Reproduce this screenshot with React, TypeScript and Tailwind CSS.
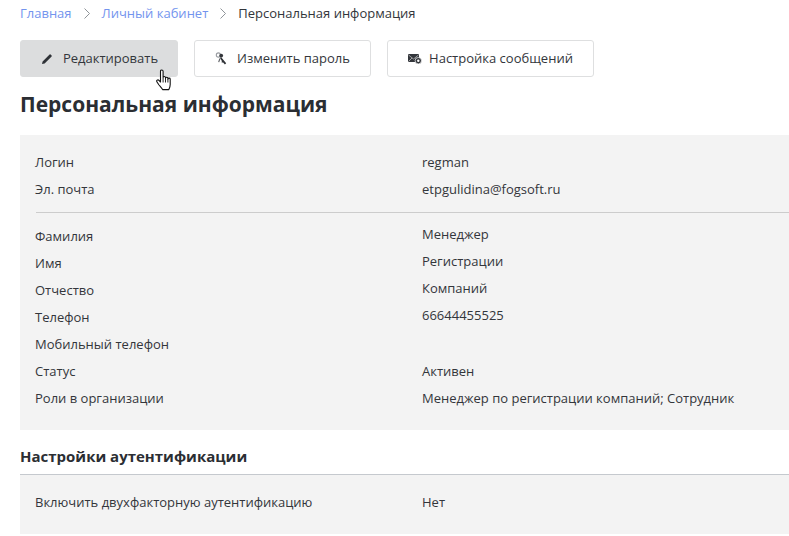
import React from 'react'

const PencilIcon = () => (
  <svg width="12" height="12" viewBox="0 0 12 12" className="shrink-0">
    <path d="M1 11l.6-2.6L8.6 1.4a.7.7 0 0 1 1 0l1 1a.7.7 0 0 1 0 1l-7 7z" fill="#2f3237" />
  </svg>
)

const KeyIcon = () => (
  <svg width="13" height="14" viewBox="0 0 13 14" className="shrink-0">
    <circle cx="3.4" cy="3" r="2.1" fill="none" stroke="#9a9da2" strokeWidth="1.1" />
    <circle cx="6.2" cy="3.6" r="1.9" fill="#33363b" />
    <path d="M6 5l5.2 6.2-1.3 1.2-2-2.2-.7.6-.8-.9.6-.7L5 6z" fill="#2f3237" />
    <path d="M4.4 6.2l1 .5-1.2 3.6-1-.4z" fill="#55585d" />
  </svg>
)

const MailGearIcon = () => (
  <svg width="14" height="12" viewBox="0 0 14 12" className="shrink-0">
    <rect x="0" y="1" width="11" height="8" rx="0.8" fill="#33363b" />
    <path d="M.5 2L5.5 6 10.5 2M.5 8.5L4 5" stroke="#cfcfcf" strokeWidth="0.7" fill="none" />
    <circle cx="10.3" cy="7.7" r="3.2" fill="#33363b" stroke="#fff" strokeWidth="0.7" />
    <circle cx="10.3" cy="7.7" r="1.2" fill="#fff" />
  </svg>
)

const Chevron = () => (
  <svg width="6" height="11" viewBox="0 0 6 11" className="mx-3 shrink-0">
    <path d="M.5.5l5 5-5 5" fill="none" stroke="#8f9499" strokeWidth="1" />
  </svg>
)

const HandCursor = () => (
  <svg width="20" height="24" viewBox="0 0 20 24" className="absolute left-[156px] top-[69px]">
    <path
      d="M4.5 2.2c0-1.6 2.6-1.6 2.6 0v6.4c0-1.4 2.4-1.4 2.4 0v.6c0-1.3 2.4-1.3 2.4 0v.8c0-1.2 2.3-1.2 2.3 0v5.6c0 2.4-.7 3.6-1.4 5H6.6c-.8-1.6-2.1-2.8-3.6-4.6L1 13c-1-1.5.8-2.8 2-1.6l1.5 1.6z"
      fill="#fff"
      stroke="#111"
      strokeWidth="1.1"
      strokeLinejoin="round"
    />
    <path d="M7.1 9v4.5M9.5 9.2v4.3M11.9 10v3.5" stroke="#111" strokeWidth="0.9" />
  </svg>
)

const accountRows = [
  { label: 'Логин', value: 'regman' },
  { label: 'Эл. почта', value: 'etpgulidina@fogsoft.ru' },
]

const personRows = [
  { label: 'Фамилия', value: 'Менеджер', up: true },
  { label: 'Имя', value: 'Регистрации', up: true },
  { label: 'Отчество', value: 'Компаний', up: true },
  { label: 'Телефон', value: '66644455525', up: true },
  { label: 'Мобильный телефон', value: '' },
  { label: 'Статус', value: 'Активен' },
  { label: 'Роли в организации', value: 'Менеджер по регистрации компаний; Сотрудник' },
]

const Row = ({ label, value, up }: { label: string; value: string; up?: boolean }) => (
  <div className="flex h-[27px] items-center">
    <div className="w-[387px] shrink-0">{label}</div>
    <div className={up ? 'pb-1' : ''}>{value}</div>
  </div>
)

const btn = 'flex h-[37px] items-center justify-center rounded-[3px] border'

export default function App() {
  return (
    <div className="relative h-[536px] w-[789px] overflow-hidden bg-white pl-5 font-['Open_Sans',sans-serif] text-[13px] text-[#33363b]">
      {/* breadcrumbs */}
      <div className="flex h-[27px] items-center">
        <span className="text-[#7394ee]">Главная</span>
        <Chevron />
        <span className="text-[#7394ee]">Личный кабинет</span>
        <Chevron />
        <span>Персональная информация</span>
      </div>

      <div className="mt-[13px] flex gap-4">
        <div className={`${btn} w-[158px] gap-[10px] border-[#dcddde] bg-[#dcddde] pl-px`}>
          <PencilIcon />
          <span>Редактировать</span>
        </div>
        <div className={`${btn} w-[177px] gap-[9px] border-[#dedfe0] bg-white`}>
          <KeyIcon />
          <span>Изменить пароль</span>
        </div>
        <div className={`${btn} w-[207px] gap-[7px] border-[#dedfe0] bg-white`}>
          <MailGearIcon />
          <span>Настройка сообщений</span>
        </div>
      </div>

      <h1 className="mt-[11px] h-[33px] text-[21px] font-bold leading-[33px] text-[#2b2e33]">Персональная информация</h1>

      <div className="mt-[14px] h-[295px] bg-[#f3f3f3] pl-[15px] pt-[14px]">
        {accountRows.map((r) => (
          <Row key={r.label} {...r} />
        ))}
        <div className="mb-[10px] ml-px mt-[9px] border-t border-[#cccccc]" />
        {personRows.map((r) => (
          <Row key={r.label} {...r} />
        ))}
      </div>

      <h2 className="mt-[13px] h-[31px] text-[15px] font-bold leading-[26px] text-[#2b2e33]">Настройки аутентификации</h2>
      <div className="border-t border-[#c5c9ce] bg-[#f3f3f3] pb-[18px] pl-[15px] pt-[14px]">
        <Row label="Включить двухфакторную аутентификацию" value="Нет" />
      </div>

      <HandCursor />
    </div>
  )
}
